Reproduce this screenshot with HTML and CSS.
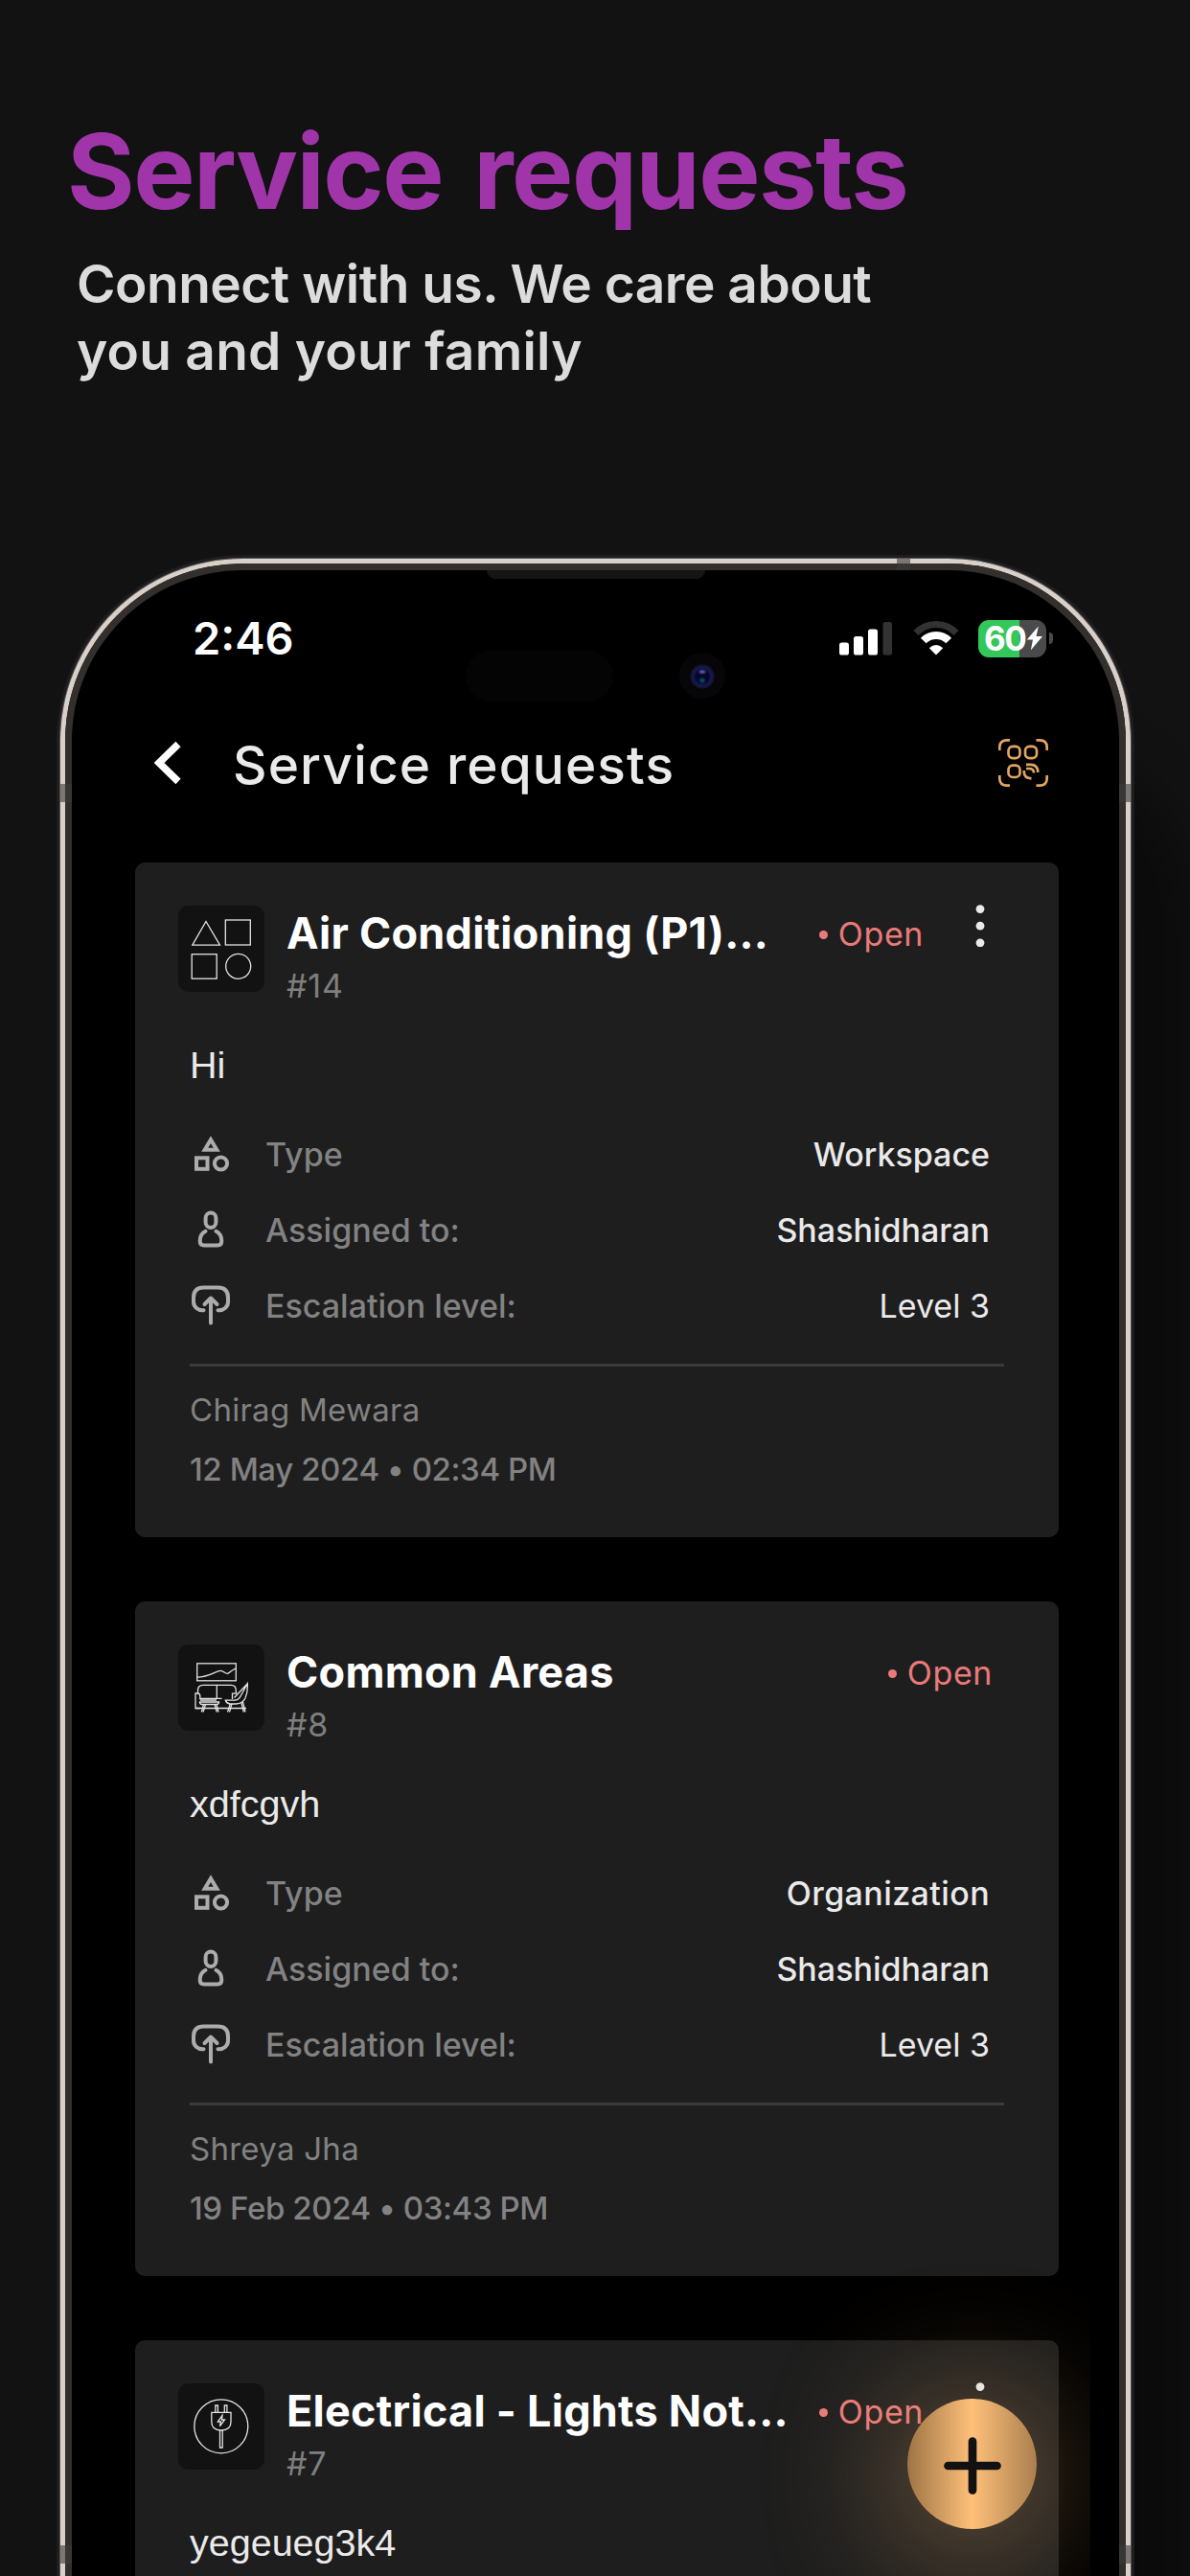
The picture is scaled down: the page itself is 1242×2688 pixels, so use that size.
FILE: index.html
```
<!DOCTYPE html>
<html lang="en">
<head>
	<meta charset="UTF-8">
	<meta name="viewport" content="width=device-width, initial-scale=1.0">
	<title>Service requests</title>
	<link rel="stylesheet" href="styles.css">
</head>
<body>
	<!-- shared row icons -->
	<svg class="defs" width="0" height="0">
		<symbol id="icon-type" viewBox="0 0 44 44">
			<path d="M22 6.2L28.3 16.8H15.7z"/>
			<rect x="7" y="25.3" width="11.5" height="11.5"/>
			<circle cx="32.5" cy="31" r="6.6"/>
		</symbol>
		<symbol id="icon-person" viewBox="0 0 44 44">
			<rect x="16.6" y="3.5" width="10.8" height="15.5" rx="5.4"/>
			<path d="M16.5 22.8C12.5 24.8 10.7 28.5 10.7 33Q10.7 37.5 15 37.5H29Q33.3 37.5 33.3 33C33.3 28.5 31.5 24.8 27.5 22.8"/>
		</symbol>
		<symbol id="icon-level" viewBox="0 0 44 44">
			<path d="M14.5 26.2C8.5 26.8 4 22.6 4 17.5V13Q4 2.5 14.5 2.5H29.5Q40 2.5 40 13V17.5C40 22.6 35.5 26.8 29.5 26.2"/>
			<path d="M22 39.5V14M15.5 20L22 13.5L28.5 20"/>
		</symbol>
		<symbol id="icon-menu" viewBox="0 0 26 44">
			<circle cx="13" cy="4.6" r="4.4"/><circle cx="13" cy="22.2" r="4.4"/><circle cx="13" cy="39.8" r="4.4"/>
		</symbol>
	</svg>

	<div class="hero">
		<h1>Service requests</h1>
		<p>Connect with us. We care about<br><span class="wide">you and your family</span></p>
	</div>

	<div class="phone">
		<div class="bezel">
			<div class="screen">
				<div class="speaker"></div>
				<div class="island"></div>
				<div class="camera"></div>

				<div class="status-bar">
					<span class="time">2:46</span>
					<svg class="signal" width="56" height="36" viewBox="0 0 56 36">
						<rect x="0" y="22.5" width="10" height="13" rx="2.6"/>
						<rect x="15" y="16" width="10" height="19.5" rx="2.6"/>
						<rect x="30" y="8.5" width="10" height="27" rx="2.6"/>
						<rect class="off" x="45.5" y="1" width="9.5" height="34.5" rx="2.6"/>
					</svg>
					<svg class="wifi" width="48" height="36" viewBox="0 0 48 36">
						<path class="off" d="M3 12.5A29 29 0 0 1 45 12.5"/>
						<path d="M10.8 20.5A18.5 18.5 0 0 1 37.2 20.5"/>
						<path class="dot" d="M24 35.5L16.8 28.2Q24 22 31.2 28.2z"/>
					</svg>
					<div class="battery">
						<span>60</span>
						<svg width="18" height="26" viewBox="0 0 18 26"><path d="M12.8 0.5L0.8 14.5H7L4.8 25.5L17 11H10.5z"/></svg>
					</div>
					<i class="nub"></i>
				</div>

				<div class="nav">
					<svg class="back" width="30" height="46" viewBox="0 0 30 46"><path d="M26 3.5L6 23L26 42.5"/></svg>
					<h2>Service requests</h2>
					<svg class="qr" width="52" height="50" viewBox="0 0 52 50">
						<path d="M1.3 12V9Q1.3 1.3 9 1.3H12"/>
						<path d="M39.5 1.3H43Q50.7 1.3 50.7 9V12"/>
						<path d="M1.3 38V41Q1.3 48.7 9 48.7H12"/>
						<path d="M39.5 48.7H43Q50.7 48.7 50.7 41V38"/>
						<rect x="10.5" y="7.8" width="12" height="12.4" rx="4.6"/>
						<rect x="28" y="7.8" width="12" height="12.4" rx="4.6"/>
						<rect x="10.5" y="27.6" width="12" height="12.4" rx="4.6"/>
						<path d="M29 26.8H33.5Q41.3 26.8 41.3 35M29 31H32Q37 31 37 35.5M26.8 33V35Q27 41 34.5 41.3"/>
					</svg>
				</div>

				<div class="list">
					<div class="card">
						<div class="card-head">
							<svg class="tile" viewBox="0 0 90 90">
								<path d="M29 16.5L43.5 41.2H14.8z"/>
								<rect x="49.3" y="15" width="26" height="26"/>
								<rect x="14.2" y="50.7" width="26" height="25.5"/>
								<circle cx="62.7" cy="63.3" r="13"/>
							</svg>
							<div class="head-text">
								<h3>Air Conditioning (P1)...</h3>
								<span class="num">#14</span>
							</div>
							<span class="state">Open</span>
							<svg class="menu"><use href="#icon-menu"/></svg>
						</div>
						<p class="message">Hi</p>
						<div class="row"><svg class="sharp"><use href="#icon-type"/></svg><span>Type</span><b>Workspace</b></div>
						<div class="row"><svg><use href="#icon-person"/></svg><span>Assigned to:</span><b>Shashidharan</b></div>
						<div class="row"><svg><use href="#icon-level"/></svg><span>Escalation level:</span><b class="light">Level 3</b></div>
						<div class="card-foot">
							<div class="author">Chirag Mewara</div>
							<div class="date">12 May 2024 • 02:34 PM</div>
						</div>
					</div>

					<div class="card">
						<div class="card-head">
							<svg class="tile" viewBox="0 0 90 90">
								<rect x="19.7" y="19.8" width="40.6" height="18"/>
								<path d="M20 34.2C32 34 40 27.2 44.5 27.4C47.5 27.8 49 30.6 51.5 30.4C54 29.5 56 26.5 60 25.2"/>
								<path d="M20.5 51V48Q20.5 42.3 26 42.3H55Q60.3 42.3 60.3 48V51M40.3 42.3V56"/>
								<path d="M22.8 66.5H18V51H20.5Q22.8 51 22.8 54V57.5M23 56.3H45.5M23 58H40"/>
								<path d="M56.5 57V51.2H61.5M42 66.5H51M18 66.5H71"/>
								<path d="M22.5 60H42.5V61Q42 62.5 40 62.5H25Q23 62.5 22.5 61zM26.5 62.5L24.3 70.5M28.5 62.5L26 70.5M38 62.5L40.3 70.5M40 62.5L42 70.5"/>
								<path d="M49.3 58.2H59Q63 58 65 54L72.3 40.8Q72.8 50 70 56Q67 62 60 62H54Q50.5 61.5 49.3 58.2zM72.3 40.8L58.5 55.5"/>
								<path d="M54.3 62L51.5 70.5M56 62L53.5 70.5M66 61L68.3 70.5M67.5 60L70 70.5"/>
							</svg>
							<div class="head-text">
								<h3>Common Areas</h3>
								<span class="num">#8</span>
							</div>
							<span class="state">Open</span>
						</div>
						<p class="message">xdfcgvh</p>
						<div class="row"><svg class="sharp"><use href="#icon-type"/></svg><span>Type</span><b class="wide">Organization</b></div>
						<div class="row"><svg><use href="#icon-person"/></svg><span>Assigned to:</span><b>Shashidharan</b></div>
						<div class="row"><svg><use href="#icon-level"/></svg><span>Escalation level:</span><b class="light">Level 3</b></div>
						<div class="card-foot">
							<div class="author">Shreya Jha</div>
							<div class="date">19 Feb 2024 • 03:43 PM</div>
						</div>
					</div>

					<div class="card">
						<div class="card-head">
							<svg class="tile" viewBox="0 0 90 90">
								<circle cx="44.8" cy="44.8" r="28"/>
								<path d="M38.8 30V23H41.4V30M48.3 30V23H50.9V30"/>
								<path d="M34.8 30.3H55V40Q55 49 44.9 49Q34.8 49 34.8 40z"/>
								<path d="M43.5 49V67H46.2V49M46 33.5L41.3 40H44.3L43.5 44.5L48.5 38H45.5z"/>
							</svg>
							<div class="head-text">
								<h3>Electrical - Lights Not...</h3>
								<span class="num">#7</span>
							</div>
							<span class="state">Open</span>
							<svg class="menu"><use href="#icon-menu"/></svg>
						</div>
						<p class="message">yegeueg3k4</p>
					</div>
				</div>

				<!-- glow is clipped a little before the screen edge -->
				<div class="fab-layer">
					<div class="fab">
						<svg width="60" height="60" viewBox="0 0 60 60"><path d="M30 4.5V55.5M4.5 30H55.5"/></svg>
					</div>
				</div>
			</div>
		</div>
		<i class="band band-top"></i>
		<i class="band band-left"></i>
		<i class="band band-right"></i>
		<i class="band band-left low"></i>
		<i class="band band-right low"></i>
	</div>
</body>
</html>
```
FILE: styles.css
```
*{margin:0;padding:0;box-sizing:border-box;}
body{
	width:1242px;
	height:2688px;
	overflow:hidden;
	background:#121212;
	color:#fff;
	font-family:Inter,"Liberation Sans",sans-serif;
}
svg{display:block;flex:none;fill:none;}
.defs{position:absolute;}

/* hero */
.hero{padding:119px 70px 0;height:583px;}
.hero h1{
	font-size:108px;
	line-height:120px;
	font-weight:700;
	letter-spacing:-1.5px;
	word-spacing:8px;
	color:#a035aa;
}
.hero p{
	margin:22px 0 0 10px;
	font-size:55px;
	line-height:70px;
	font-weight:600;
	letter-spacing:-.5px;
	color:#dcdcdc;
}
.hero .wide{letter-spacing:.25px;}

/* phone */
.phone{
	position:relative;
	width:1117px;
	height:2105px;
	margin-left:63px;
	border:5px solid #d8d0c9;
	border-bottom:0;
	border-radius:190px 190px 0 0;
	box-shadow:0 0 0 1px #55514e,0 0 0 4px #1d1c1e,65px 190px 60px rgba(0,0,0,.4);
}
.bezel{height:100%;border:7px solid #332f2d;border-bottom:0;border-radius:185px 185px 0 0;background:#332f2d;}
.screen{
	position:relative;
	height:100%;
	overflow:hidden;
	border-radius:178px 178px 0 0;
	background:#000;
}
.band{position:absolute;background:rgba(62,60,60,.6);}
.band-top{left:868px;top:-5px;width:14px;height:12px;}
.band-left{left:-5px;top:230px;width:12px;height:19px;}
.band-right{right:-5px;top:230px;width:12px;height:19px;}
.band.low{top:2068px;}
.speaker{position:absolute;left:433px;top:0;width:228px;height:9px;border-radius:0 0 9px 9px;background:#151515;}
.island{position:absolute;left:411px;top:84px;width:154px;height:53px;border-radius:27px;background:#040404;}
.camera{
	position:absolute;
	left:634px;
	top:86px;
	width:48px;
	height:48px;
	border-radius:50%;
	background:
		radial-gradient(ellipse 5px 3px at 24px 20px,#6a6ac8,transparent),
		radial-gradient(ellipse 4px 4px at 24px 29px,#0d5a66,transparent),
		radial-gradient(circle at 24px 25px,#06062a 7px,#151a50 9px,#11142f 12px,#080508 13px);
}

/* status bar */
.status-bar{display:flex;align-items:center;height:99px;padding:43px 69px 0 126px;}
.time{flex:1;font-size:47px;line-height:56px;font-weight:600;}
.signal{fill:#fff;margin-right:21px;}
.signal .off{fill:#323232;}
.wifi{stroke:#fff;stroke-width:8px;margin-right:20px;}
.wifi .off{stroke:#323232;stroke-width:7px;}
.wifi .dot{fill:#fff;stroke:none;}
.battery{
	display:flex;
	align-items:center;
	width:71px;
	height:39px;
	padding-left:6px;
	border-radius:11px;
	background:linear-gradient(90deg,#34c759 60%,#4a4a4c 60%);
}
.battery span{font-size:35px;line-height:39px;font-weight:700;letter-spacing:-1.6px;}
.battery svg{fill:#fff;margin-left:1px;}
.nub{width:4px;height:12px;margin-left:3px;border-radius:0 4px 4px 0;background:#4a4a4c;}

/* nav */
.nav{display:flex;align-items:center;height:136px;padding:72px 74px 0 85px;}
.back{stroke:#fff;stroke-width:7.5px;margin:-4px 53px 0 0;}
.nav h2{flex:1;font-size:55px;line-height:64px;font-weight:500;letter-spacing:1.1px;color:#eaeaea;}
.qr{stroke:#dfa562;stroke-width:2.7px;margin-top:-4px;}

/* cards */
.list{display:flex;flex-direction:column;gap:67px;padding:70px 63px 0 66px;}
.card{height:704px;padding-top:45px;border-radius:10px;background:#1e1e1e;}
.card:last-child{height:246px;border-radius:10px 10px 0 0;}
.card-head{display:flex;align-items:flex-start;height:104px;padding:0 69px 0 45px;}
.tile{width:90px;height:90px;border-radius:11px;background:#121212;stroke:#e4e4e4;stroke-width:1.3px;}
.head-text{flex:1;padding:3px 0 0 23px;white-space:nowrap;}
.head-text h3{font-size:45px;line-height:52px;font-weight:700;letter-spacing:.25px;}
.num{display:block;margin-top:9px;font-size:34px;line-height:40px;letter-spacing:.8px;color:#7f7f7f;}
.state{
	display:flex;
	align-items:center;
	gap:11px;
	margin-top:10px;
	font-size:34px;
	line-height:40px;
	letter-spacing:.6px;
	color:#ea7a7a;
}
.state:before{content:"";width:9px;height:9px;border-radius:50%;background:#ea7a7a;}
.menu{width:26px;height:44px;margin-left:46px;margin-top:-1px;fill:#eaeaea;}
.message{
	margin:38px 57px 30px;
	font-family:"Liberation Sans",Arial,sans-serif;
	font-size:39.5px;
	line-height:48px;
	color:#eaeaea;
}
.row{
	display:flex;
	align-items:center;
	height:79px;
	padding:0 72px 0 57px;
	font-size:34px;
	font-weight:500;
	color:#828282;
}
.row svg{width:44px;height:44px;margin-right:35px;stroke:#acacac;stroke-width:4px;stroke-linecap:round;stroke-linejoin:round;}
.row svg.sharp{stroke-linecap:butt;stroke-linejoin:miter;}
.row b{margin-left:auto;font-weight:500;color:#eaeaea;}
.row b.light{font-weight:400;}
.row b.wide{letter-spacing:.4px;}
.card-foot{
	margin:21px 57px 0;
	padding-top:25px;
	border-top:3px solid #3a3a3a;
	font-size:33px;
	line-height:40px;
	color:#828282;
}
.author{letter-spacing:.27px;}
.date{margin-top:22px;font-weight:500;letter-spacing:-.4px;}

/* floating add button */
.fab-layer{position:absolute;left:0;right:30px;top:0;bottom:0;overflow:hidden;}
.fab{
	position:absolute;
	left:872px;
	top:1908px;
	display:flex;
	align-items:center;
	justify-content:center;
	width:135px;
	height:136px;
	padding-top:3px;
	border-radius:50%;
	background:linear-gradient(90deg,#9e7445,#fec079 50%,#aa7f4e);
	box-shadow:0 12px 140px 12px rgba(254,190,120,.42);
}
.fab svg{stroke:#121212;stroke-width:8.7px;stroke-linecap:round;}
```
